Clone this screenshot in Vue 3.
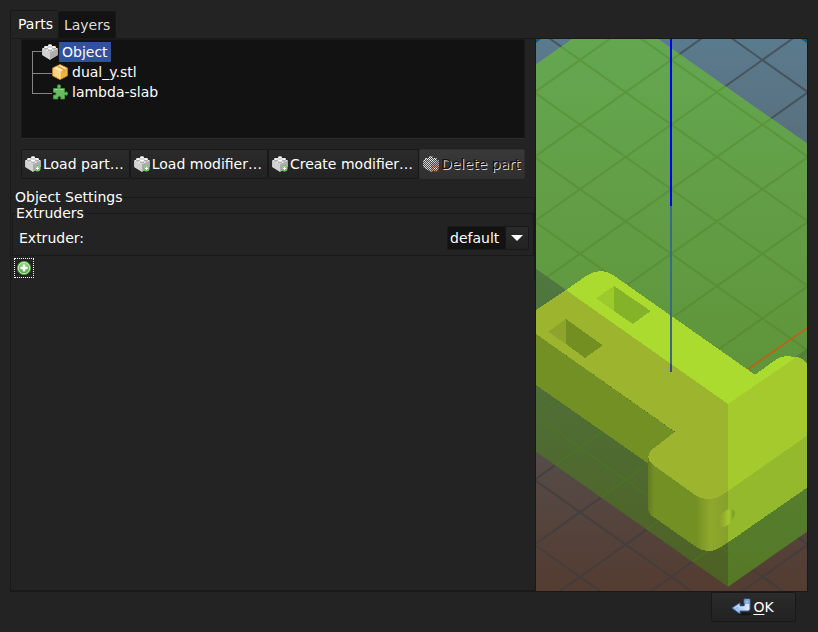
<script setup>
import { ref } from 'vue'

const tabs = ['Parts', 'Layers']
const activeTab = ref('Parts')
const selected = ref('Object')
const extruder = ref('default')

const tree = [
  { name: 'Object', icon: 'brick', level: 0 },
  { name: 'dual_y.stl', icon: 'package', level: 1 },
  { name: 'lambda-slab', icon: 'plugin', level: 1 },
]

const actions = [
  { label: 'Load part…', badge: 'add' },
  { label: 'Load modifier…', badge: 'add' },
  { label: 'Create modifier…', badge: 'add' },
  { label: 'Delete part', badge: 'remove', disabled: true },
]

// Print bed grid: two families of parallel lines, seen isometrically.
const slope = 32.3 / 45.6
const gridPath = Array.from({ length: 14 }, (_, i) => {
  const y = 60 + (i - 3) * 64.6
  const left = 580 - 60
  const right = 580 + 240
  return `M${left} ${y - 60 * slope}L${right} ${y + 240 * slope}M${left} ${y + 60 * slope}L${right} ${y - 240 * slope}`
}).join('')
</script>

<template>
  <div class="dialog">
    <svg class="defs" width="0" height="0" aria-hidden="true">
      <defs>
        <pattern id="stipple" width="2" height="2" patternUnits="userSpaceOnUse">
          <path d="M0 0h1v1H0zM1 1h1v1H1z" fill="#4a4a4a" />
        </pattern>
        <linearGradient id="addGreen" x1="0" y1="0" x2="0" y2="1">
          <stop offset="0" stop-color="#9ad889" />
          <stop offset="1" stop-color="#4da63c" />
        </linearGradient>
        <linearGradient id="arrowBlue" x1="0" y1="0" x2="1" y2="0">
          <stop offset="0" stop-color="#7fb0e6" />
          <stop offset="1" stop-color="#e6eef8" />
        </linearGradient>
        <symbol id="brick" viewBox="0 0 16 16">
          <path d="M0.300 4.500L8 1.500l7.700 3v6.500L8 15.700 0.300 11z" fill="#d9d9d9" />
          <path d="M.3 4.500L8 8v7.700L.3 11z" fill="#d2d2d2" />
          <path d="M15.700 4.500L8 8v7.700l7.700-4.700z" fill="#adadad" />
          <path d="M.3 4.500L8 1.500l7.700 3L8 8z" fill="#f2f2f2" />
          <path d="M6 1.200v2c.5 1 3.500 1 4 0v-2z" fill="#cfcfcf" />
          <path d="M2 2.900v2c.5 1 3.500 1 4 0v-2zM10 2.900v2c.5 1 3.500 1 4 0v-2zM6 4.700v2c.5 1 3.500 1 4 0v-2z" fill="#b0b0b0" />
          <ellipse cx="8" cy="1.300" rx="2" ry="1" fill="#fff" />
          <ellipse cx="4" cy="3" rx="2" ry="1" fill="#fff" />
          <ellipse cx="12" cy="3" rx="2" ry="1" fill="#fff" />
          <ellipse cx="8" cy="4.800" rx="2" ry="1" fill="#fff" />
        </symbol>
        <symbol id="package" viewBox="0 0 16 16">
          <path d="M8 .6l7.300 3.400v7.800L8 15.500.7 11.800V4z" fill="#f5c455" stroke="#c98a2b" />
          <path d="M1.200 4.500L8 7.700v7.200l-6.800-3.500z" fill="#f9d27a" />
          <path d="M14.800 4.500L8 7.700v7.200l6.800-3.500z" fill="#eeb441" />
          <path d="M8 1.200l6.600 3.100L8 7.500 1.400 4.300z" fill="#fdeab4" />
          <path d="M4.800 2.700l6.400 3.200v3l1.800-.9V4.900L6.600 1.900z" fill="#e2a63a" />
          <path d="M8 7.500v7.400" stroke="#ffe9ac" />
        </symbol>
        <symbol id="plugin" viewBox="0 0 16 16">
          <path
            d="M1.500 4.500h4c.6 0 .5-.6.2-1.100C5 2 5.700.7 7 .7S9 2 8.300 3.400c-.3.500-.3 1.100.3 1.100h3.900v3.300c0 .7.500.7 1 .4 1.200-.7 2.200.1 2.200 1.400s-1 2-2.200 1.300c-.5-.3-1-.2-1 .5v3.500H9.300c-.7 0-.7-.5-.5-.9.500-1.200-.3-1.800-1.400-1.800s-1.900.7-1.400 1.800c.2.500.1.900-.5.900h-4v-3.300c0-.6.4-.7.8-.5 1.100.4 1.800-.3 1.800-1.300s-.8-1.700-1.800-1.200c-.4.200-.8 0-.8-.6z"
            fill="#6abb5b"
            stroke="#459846"
          />
          <path d="M2.500 5.600h3.800M7.800 5.600h3.500" stroke="#a5dc96" />
        </symbol>
        <symbol id="add" viewBox="0 0 16 16">
          <circle cx="8" cy="8" r="7" fill="#52a743" />
          <circle cx="8" cy="8" r="5.700" fill="url(#addGreen)" stroke="#c5e9b9" />
          <path d="M8 4.500v7M4.500 8h7" stroke="#fff" stroke-width="2.400" />
        </symbol>
        <symbol id="remove" viewBox="0 0 16 16">
          <circle cx="8" cy="8" r="7" fill="#dc8a66" />
          <path d="M4 8h8" stroke="#fff" stroke-width="3" />
        </symbol>
        <symbol id="enter" viewBox="0 0 20 18">
          <ellipse cx="13" cy="16" rx="7" ry="1.500" fill="#151515" />
          <path
            d="M13 1h6v9.500c0 1.500-.8 2.500-2.500 2.500H9v3L.8 10 9 4.800V8h3.500c.6 0 .8-.2.800-.8V5.500H13z"
            fill="url(#arrowBlue)"
            stroke="#32609c"
          />
          <path d="M14.300 2.300h3.400v3h-3.400z" fill="#a9c8ec" stroke="#5682bb" stroke-width=".7" />
          <path d="M3 10l5-3.300V9h6" fill="none" stroke="#d8e8fa" stroke-width=".8" />
        </symbol>
      </defs>
    </svg>

    <main class="content">
      <section class="side">
        <nav class="tabs" role="tablist">
          <button
            v-for="tab in tabs"
            :key="tab"
            type="button"
            role="tab"
            class="tab"
            :class="{ active: tab === activeTab }"
            :aria-selected="tab === activeTab"
            @click="activeTab = tab"
          >{{ tab }}</button>
        </nav>

        <div class="page">
          <ul class="tree" role="tree">
            <li
              v-for="node in tree"
              :key="node.name"
              class="node"
              :class="[node.level ? 'child' : 'root', { selected: node.name === selected }]"
              role="treeitem"
              :aria-selected="node.name === selected"
              @click="selected = node.name"
            >
              <svg class="icon"><use :href="'#' + node.icon" /></svg>
              <span class="name">{{ node.name }}</span>
            </li>
          </ul>

          <div class="actions">
            <button v-for="a in actions" :key="a.label" type="button" class="button" :disabled="a.disabled">
              <svg class="icon" viewBox="0 0 16 16">
                <use href="#brick" width="16" height="16" />
                <use :href="'#' + a.badge" x="9" y="9" width="7" height="7" />
                <path v-if="a.disabled" d="M0 4l8-4 8 4v12H8L0 11z" fill="url(#stipple)" />
              </svg>
              <span>{{ a.label }}</span>
            </button>
          </div>

          <fieldset class="settings">
            <legend>Object Settings</legend>
            <fieldset class="group">
              <legend>Extruders</legend>
              <div class="row">
                <label for="extruder">Extruder:</label>
                <div class="combo">
                  <select id="extruder" v-model="extruder">
                    <option>default</option>
                    <option>1</option>
                    <option>2</option>
                  </select>
                  <span class="drop"></span>
                </div>
              </div>
            </fieldset>
            <button type="button" class="add" aria-label="Add setting">
              <svg class="icon"><use href="#add" /></svg>
            </button>
          </fieldset>
        </div>
      </section>

      <section class="preview">
        <svg class="scene" viewBox="536 39 271 552" preserveAspectRatio="xMidYMid slice">
          <defs>
            <linearGradient id="sky" x1="0" y1="0" x2="0" y2="1">
              <stop offset="0" stop-color="#5a7b8e" />
              <stop offset="1" stop-color="#543c31" />
            </linearGradient>
            <linearGradient id="slabTop" gradientUnits="userSpaceOnUse" x1="0" y1="39" x2="0" y2="400">
              <stop offset="0" stop-color="#64a751" />
              <stop offset="1" stop-color="#5f9338" />
            </linearGradient>
            <linearGradient id="slabLeft" gradientUnits="userSpaceOnUse" x1="0" y1="270" x2="0" y2="590">
              <stop offset="0" stop-color="#507842" />
              <stop offset="1" stop-color="#4e6023" />
            </linearGradient>
            <linearGradient id="slabRight" gradientUnits="userSpaceOnUse" x1="0" y1="350" x2="0" y2="590">
              <stop offset="0" stop-color="#54863a" />
              <stop offset="1" stop-color="#567825" />
            </linearGradient>
            <linearGradient id="boss" gradientUnits="userSpaceOnUse" x1="648" y1="0" x2="728" y2="0">
              <stop offset="0" stop-color="#657b22" />
              <stop offset=".08" stop-color="#739024" />
              <stop offset=".6" stop-color="#739024" />
              <stop offset=".78" stop-color="#8fa82c" />
              <stop offset="1" stop-color="#86a02b" />
            </linearGradient>
            <linearGradient id="bore" x1="0" y1="0" x2="1" y2="0">
              <stop offset="0" stop-color="#8a9e2b" />
              <stop offset=".35" stop-color="#98b12d" />
              <stop offset=".65" stop-color="#a2ca2e" />
              <stop offset="1" stop-color="#789524" />
            </linearGradient>
            <clipPath id="slabClip">
              <path d="M536 64.300L572 39h86.300L807 143.300v388.400l-79 55L536 451.700z" />
            </clipPath>
          </defs>

          <rect x="536" y="39" width="271" height="552" fill="url(#sky)" />
          <path :d="gridPath" stroke="#393c3f" stroke-opacity=".6" stroke-width="2" />
          <path d="M536 39h5l-5 4zM807 39h-6l6 4z" fill="#075d88" />

          <path d="M536 64.300L572 39h86.300L807 143.300V349l-79 55.500L536 269z" fill="url(#slabTop)" />
          <path d="M536 269l192 135v182.700L536 451.700z" fill="url(#slabLeft)" />
          <path d="M728 404.500L807 349v182.700l-79 55z" fill="url(#slabRight)" />
          <path :d="gridPath" stroke="#4b7d1d" stroke-opacity=".34" stroke-width="2" clip-path="url(#slabClip)" />

          <path d="M747.700 369.300L807 328" stroke="#c85c10" stroke-width="1.500" />

          <g shape-rendering="crispEdges">
            <path d="M536 334l139 98-20 19-6 13L536 385z" fill="#739024" />
            <path d="M648 457v51c0 5 2.500 7.500 7 10l42 29.500c8 5 17 5 25-1l6-4.200V457z" fill="url(#boss)" />
            <path d="M728 491l79-55.300v52l-79 54.800z" fill="#94b92c" />
            <path
              d="M566 290l162 114v87l-5 3.500c-8 6-18 6-26.500 1.500L656 467c-10-6-10.500-14 0-20.500l19-14.700L536 334v-24z"
              fill="#9db42e"
            />
            <path d="M728 404l67-47c5 0 8 2 12 6v72.700L728 491z" fill="#a5ca2e" />
            <path
              d="M566 290l20-14c8-6 19-7 27-1l142 99.700 20-14.500c8-5.500 14-5 20-2.200L728 404z"
              fill="#acdb30"
            />
            <path d="M596 298.300L614 286v25z" fill="#9cc92c" />
            <path d="M614 286l36.700 25-18 13L614 311z" fill="#84b228" />
            <path d="M548 331.700L566 319v25z" fill="#8ca32c" />
            <path d="M566 319l36.700 26.300L585 358l-19-14z" fill="#738f22" />
          </g>
          <path d="M719.600 526.500A6.500 11 39 0 1 733.400 509.500A6.500 11 39 0 1 719.600 526.500z" fill="url(#bore)" />

          <path d="M671 39v167" stroke="#0000ff" stroke-width="2" />
          <path d="M671 206v158" stroke="#366b88" stroke-width="2" />
          <path d="M671 364v8" stroke="#304c87" stroke-width="2" />
        </svg>
      </section>
    </main>

    <footer class="footer">
      <button type="button" class="button ok">
        <svg class="enter"><use href="#enter" /></svg>
        <span><u>O</u>K</span>
      </button>
    </footer>
  </div>
</template>

<style>
body {
  margin: 0;
  background: #232323;
}
</style>

<style scoped>
* {
  box-sizing: border-box;
}
.dialog {
  display: flex;
  flex-direction: column;
  min-height: 100vh;
  padding: 10px;
  background: #232323;
  color: #fff;
  font: 14px/16px 'DejaVu Sans', sans-serif;
}
.defs {
  position: absolute;
}
button,
select {
  margin: 0;
  color: inherit;
  font: inherit;
}
.icon {
  flex: none;
  width: 16px;
  height: 16px;
}
.content {
  flex: 1;
  display: grid;
  grid-template-columns: 525fr 273fr;
}
.side {
  display: flex;
  flex-direction: column;
  min-width: 0;
}
.tabs {
  display: flex;
  align-items: flex-end;
  height: 28px;
}
.tab {
  height: 27px;
  padding: 0 5px;
  border: 1px solid #181818;
  border-bottom: 0;
  border-radius: 2px 2px 0 0;
  background: #131313;
  color: #ddd;
}
.tab.active {
  height: 28px;
  padding: 0 5px 2px 7px;
  border-right: 0;
  background: #232323;
  color: #fff;
}
.page {
  flex: 1;
  padding-left: 1px;
  border: solid #191919;
  border-width: 1px 0 2px 1px;
}
.tree {
  height: 100px;
  margin: 0 10px 0 9px;
  padding: 2px 0 0 10px;
  border: 1px solid #191919;
  border-bottom-color: #2e2e2e;
  background: #121212;
  list-style: none;
}
.node {
  display: flex;
  align-items: center;
  height: 20px;
  cursor: default;
}
.node::before {
  content: '';
  flex: none;
  align-self: flex-start;
  width: 9px;
  height: 20px;
  border-left: 1px solid #858585;
}
.root::before {
  align-self: flex-end;
  height: 10px;
  border-top: 1px solid #858585;
}
.child::before {
  width: 19px;
  height: 11px;
  border-bottom: 1px solid #858585;
}
.child:not(:last-child) {
  background: linear-gradient(#858585, #858585) no-repeat 0 0 / 1px 100%;
}
.name {
  margin-left: 1px;
  padding: 2px 3px;
}
.selected .name {
  background: #30519c;
}
.actions {
  display: flex;
  margin: 10px 10px 0 9px;
}
.button {
  display: flex;
  align-items: center;
  gap: 2px;
  height: 30px;
  padding: 0 5px 0 3px;
  border: 1px solid #181818;
  border-radius: 2px;
  background: linear-gradient(#2b2b2b, #222);
  white-space: nowrap;
}
.actions .button:disabled {
  flex: 1;
  min-width: 0;
  overflow: hidden;
  border-color: #2f2f2f;
  background: linear-gradient(#393939, #303030);
  color: #111;
  text-shadow: 1px 1px #ddd;
}
fieldset {
  min-width: 0;
  margin: 0;
  padding: 0;
  border: 1px solid #191919;
}
legend {
  padding: 0;
}
.settings {
  margin-top: 10px;
  border-width: 1px 1px 0 0;
}
.settings > legend {
  margin-left: 3px;
}
.group > legend {
  margin-left: 3px;
}
.row {
  display: flex;
  align-items: center;
  justify-content: space-between;
  padding: 5px 4px 5px 6px;
}
.combo {
  display: flex;
  position: relative;
}
select {
  appearance: none;
  width: 82px;
  height: 24px;
  padding: 0 25px 0 2px;
  border: 1px solid #191919;
  border-radius: 2px;
  outline: 0;
  background: #121212;
}
.drop {
  position: absolute;
  top: 0;
  right: 0;
  display: grid;
  place-items: center;
  width: 24px;
  height: 24px;
  border: 1px solid #181818;
  border-radius: 2px;
  background: linear-gradient(#2b2b2b, #222);
  pointer-events: none;
}
.drop::before {
  content: '';
  border: solid transparent;
  border-width: 6px 6px 0;
  border-top-color: #fff;
}
.add {
  display: grid;
  place-items: center;
  width: 20px;
  height: 20px;
  margin: 2px;
  padding: 0;
  border: 1px dotted #fff;
  background: none;
}
.preview {
  display: flex;
  position: relative;
  min-width: 0;
  margin-top: 28px;
  border: 1px solid #191919;
}
.scene {
  position: absolute;
  width: 100%;
  height: 100%;
}
.footer {
  display: flex;
  justify-content: flex-end;
  padding-right: 12px;
}
.ok {
  justify-content: center;
  width: 85px;
}
.enter {
  width: 20px;
  height: 18px;
}
.ok u {
  text-underline-offset: 2px;
}
</style>
